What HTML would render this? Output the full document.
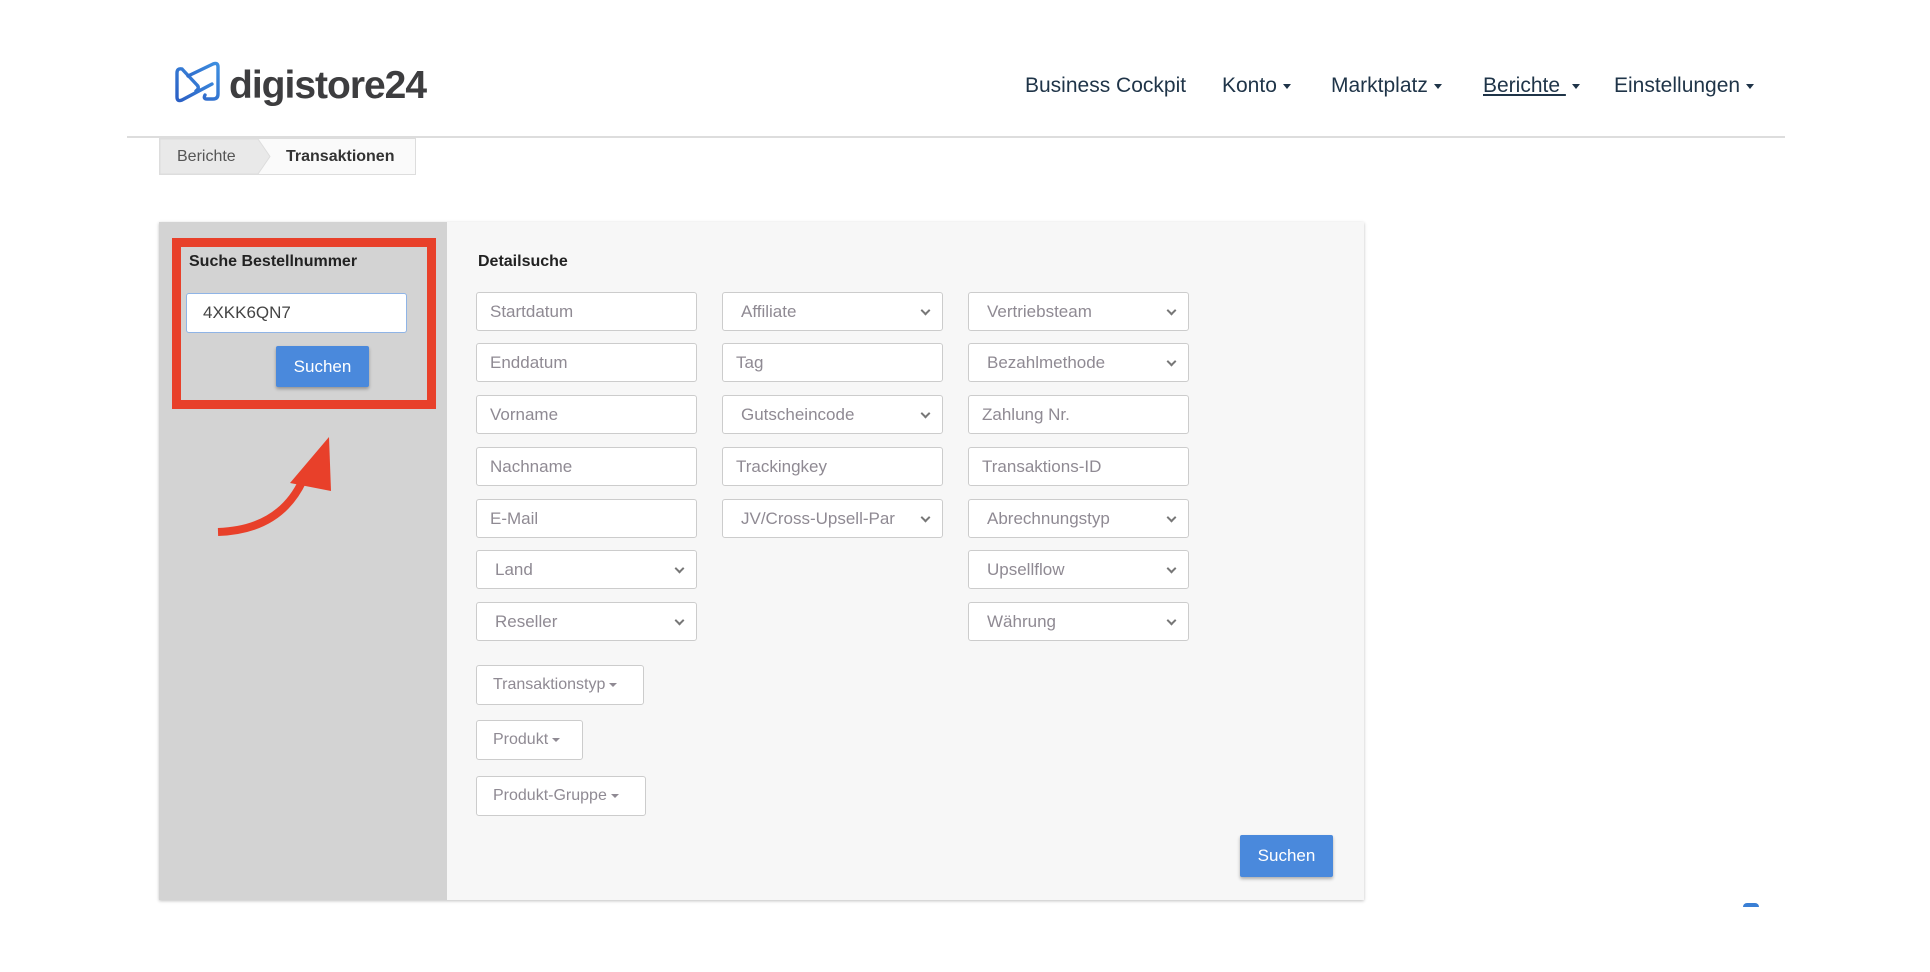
<!DOCTYPE html>
<html><head><meta charset="utf-8"><style>
*{box-sizing:border-box;margin:0;padding:0}
body{width:1930px;height:972px;background:#fff;font-family:"Liberation Sans",Arial,sans-serif;position:relative;overflow:hidden}
.abs{position:absolute}
.logo{left:229px;top:64px;font-size:39px;font-weight:bold;color:#3d3d3f;letter-spacing:-1px}
.nav{top:74px;font-size:21px;color:#1f3448}
.caret{display:inline-block;width:0;height:0;border-left:4px solid transparent;border-right:4px solid transparent;border-top:5px solid #1f3448;vertical-align:middle;margin-left:6px}
.hline{left:127px;top:136px;width:1658px;height:2px;background:#ddd}
.bc{left:159px;top:138px;width:257px;height:37px;border:1px solid #ddd;background:#fafafa}
.panel{left:159px;top:222px;width:1205px;height:678px;background:#f7f7f7;box-shadow:0 1px 3px rgba(0,0,0,.25)}
.gray{left:159px;top:222px;width:288px;height:678px;background:#d3d3d3}
.red{left:172px;top:238px;width:264px;height:171px;border:9px solid #e8402a}
.in{position:absolute;width:221px;height:39px;background:#fff;border:1px solid #ccc;border-radius:3px;font-size:17px;color:#8f8a93;padding:9px 0 0 13px}
.sel{padding-left:18px}
.sel:after{content:"";position:absolute;right:13px;top:14px;width:5px;height:5px;border-right:2px solid #777;border-bottom:2px solid #777;transform:rotate(45deg)}
.dd{position:absolute;height:40px;background:#fff;border:1px solid #ccc;border-radius:3px;font-size:16px;color:#8f8a93;padding:10px 0 0 16px}
.dd i{display:inline-block;border-left:4px solid transparent;border-right:4px solid transparent;border-top:4px solid #8f8a93;vertical-align:middle;margin-left:4px}
.btn{position:absolute;background:#4a89dc;color:#fff;font-size:17px;text-align:center;box-shadow:0 2px 3px rgba(0,0,0,.3);border-radius:2px}
</style></head><body>
<svg class="abs" style="left:174px;top:60px" width="48" height="46" viewBox="0 0 48 46">
<defs><linearGradient id="g" x1="0" y1="1" x2="1" y2="0"><stop offset="0" stop-color="#2b5fc4"/><stop offset="1" stop-color="#3d8fe0"/></linearGradient></defs>
<path d="M8 9 Q3 8 3 13 V37 Q3 42 8 40 L38 24 M8 9 L23 25 Q26 28 22 31" fill="none" stroke="url(#g)" stroke-width="3.4" stroke-linejoin="round" stroke-linecap="round"/>
<path d="M14 16 L39 4 Q44 2 44 7 V34 Q44 39 39 39 H33 Q29 39 31 35" fill="none" stroke="url(#g)" stroke-width="3.4" stroke-linejoin="round" stroke-linecap="round"/>
</svg>
<div class="abs logo">digistore24</div>
<div class="abs nav" style="left:1025px">Business Cockpit</div>
<div class="abs nav" style="left:1222px">Konto<span class="caret"></span></div>
<div class="abs nav" style="left:1331px">Marktplatz<span class="caret"></span></div>
<div class="abs nav" style="left:1483px"><span style="text-decoration:underline">Berichte </span><span class="caret"></span></div>
<div class="abs nav" style="left:1614px">Einstellungen<span class="caret"></span></div>
<div class="abs hline"></div>
<div class="abs bc"></div>
<svg class="abs" style="left:160px;top:139px" width="112" height="35"><path d="M0 0 H98 L110 17.5 L98 35 H0Z" fill="#e9e9e9" stroke="#ddd"/></svg>
<div class="abs" style="left:177px;top:148px;font-size:16px;color:#555">Berichte</div>
<div class="abs" style="left:286px;top:148px;font-size:16px;font-weight:bold;color:#333">Transaktionen</div>
<div class="abs panel"></div>
<div class="abs gray"></div>
<div class="abs red"></div>
<div class="abs" style="left:189px;top:253px;font-size:16px;font-weight:bold;color:#222">Suche Bestellnummer</div>
<div class="in" style="left:186px;top:293px;width:221px;height:40px;border-color:#8fb4e6;color:#444;font-size:17px;padding-left:16px">4XKK6QN7</div>
<div class="btn" style="left:276px;top:346px;width:93px;height:41px;line-height:41px">Suchen</div>
<svg class="abs" style="left:200px;top:420px" width="150" height="130"><path d="M18 112 Q80 110 103 60" fill="none" stroke="#e8402a" stroke-width="8"/><path d="M129 17 L90 63 L131 71Z" fill="#e8402a"/></svg>
<div class="abs" style="left:478px;top:253px;font-size:16px;font-weight:bold;color:#222">Detailsuche</div>

<div class="in" style="left:476px;top:292px">Startdatum</div>
<div class="in" style="left:476px;top:343px">Enddatum</div>
<div class="in" style="left:476px;top:395px">Vorname</div>
<div class="in" style="left:476px;top:447px">Nachname</div>
<div class="in" style="left:476px;top:499px">E-Mail</div>
<div class="in sel" style="left:476px;top:550px">Land</div>
<div class="in sel" style="left:476px;top:602px">Reseller</div>

<div class="in sel" style="left:722px;top:292px">Affiliate</div>
<div class="in" style="left:722px;top:343px">Tag</div>
<div class="in sel" style="left:722px;top:395px">Gutscheincode</div>
<div class="in" style="left:722px;top:447px">Trackingkey</div>
<div class="in sel" style="left:722px;top:499px">JV/Cross-Upsell-Par</div>

<div class="in sel" style="left:968px;top:292px">Vertriebsteam</div>
<div class="in sel" style="left:968px;top:343px">Bezahlmethode</div>
<div class="in" style="left:968px;top:395px">Zahlung Nr.</div>
<div class="in" style="left:968px;top:447px">Transaktions-ID</div>
<div class="in sel" style="left:968px;top:499px">Abrechnungstyp</div>
<div class="in sel" style="left:968px;top:550px">Upsellflow</div>
<div class="in sel" style="left:968px;top:602px">Währung</div>

<div class="dd" style="left:476px;top:665px;width:168px">Transaktionstyp<i></i></div>
<div class="dd" style="left:476px;top:720px;width:107px">Produkt<i></i></div>
<div class="dd" style="left:476px;top:776px;width:170px">Produkt-Gruppe<i></i></div>
<div class="btn" style="left:1240px;top:835px;width:93px;height:42px;line-height:42px">Suchen</div>
<div class="abs" style="left:1743px;top:903px;width:16px;height:4px;background:#3a7fd5;border-radius:8px 8px 0 0"></div>
</body></html>
